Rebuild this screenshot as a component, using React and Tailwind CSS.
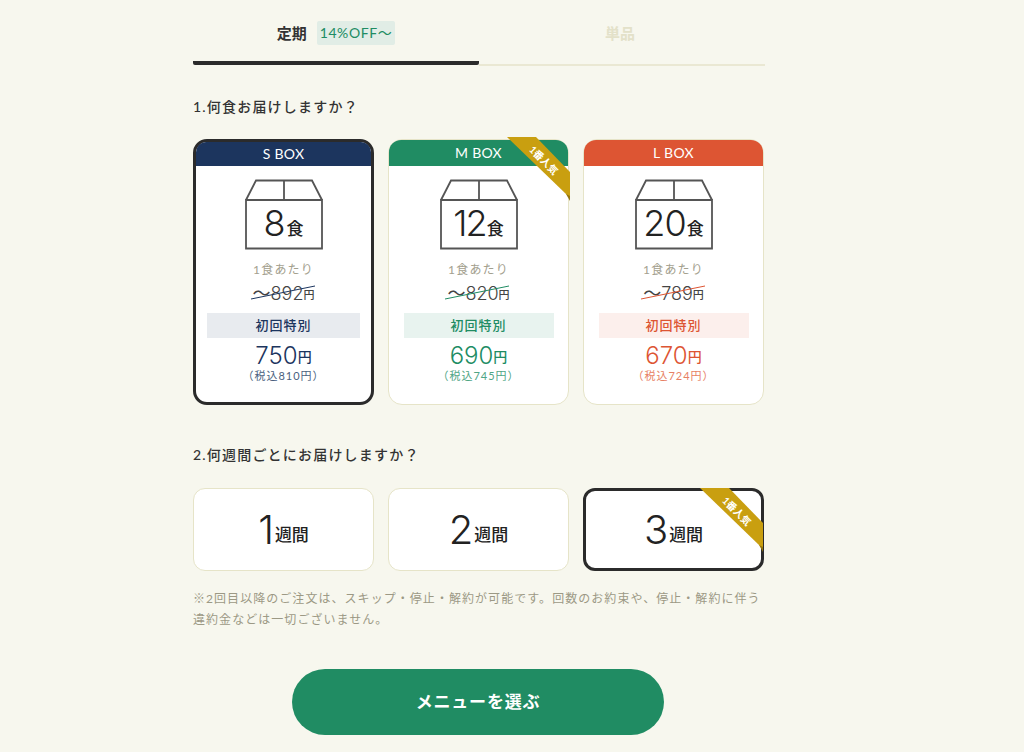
import React from 'react';

const FONT = { fontFamily: 'Lato, "Noto Sans CJK JP", sans-serif' };
const NUM = { fontFamily: 'Inter, sans-serif' };

const boxes = [
  { name: 'S BOX', count: 8, countClass: '', old: '892', price: '750', tax: '（税込810円）', selected: true, header: 'bg-[#1c355e]', text: 'text-[#1c355e]', tax2: 'text-[#4a5f80]', band: 'bg-[#e8ebef] w-[153px]', line: '#1c355e' },
  { name: 'M BOX', count: 12, countClass: 'tracking-[-2px]', old: '820', price: '690', tax: '（税込745円）', ribbon: true, header: 'bg-[#208c63]', text: 'text-[#208c63]', tax2: 'text-[#4fa585]', band: 'bg-[#e8f3ef] w-[150px]', line: '#208c63' },
  { name: 'L BOX', count: 20, countClass: 'tracking-[-1px]', old: '789', price: '670', tax: '（税込724円）', header: 'bg-[#dd5533]', text: 'text-[#dd5533]', tax2: 'text-[#e77f65]', band: 'bg-[#fcefec] w-[150px]', line: '#dd5533' },
];

function Ribbon() {
  return (
    <div className="absolute -right-[2px] -top-[3px] w-[63px] h-[64px]">
      <svg viewBox="0 0 63 64" className="absolute inset-0 w-full h-full">
        <path d="M59 57L63 64V53Z" fill="#94750c" />
        <path d="M0 0H29L63 35V59L59 57Z" fill="#c99f10" />
      </svg>
      <span className="absolute left-[19px] top-[17px] w-[36px] text-center text-[10px] leading-[12px] font-bold text-white rotate-45 whitespace-nowrap">1番人気</span>
    </div>
  );
}

function BoxIcon() {
  return (
    <svg viewBox="0 0 78 71" className="w-[78px] h-[71px]" fill="none" stroke="#555" strokeWidth="1.8">
      <path d="M1 21H77V69.5H1Z" />
      <path d="M1 21L11 1.5H67L77 21M39 1.5V21" />
    </svg>
  );
}

function BoxCard({ box }) {
  return (
    <div className={`relative w-[181px] h-[266px] bg-white rounded-[14px] ${box.selected ? 'border-[3px] border-[#2b2b2b]' : 'border border-[#e6e4c8]'}`}>
      <div className={`flex items-center justify-center pb-[2px] text-white text-[14px] tracking-[0.3px] ${box.header} ${box.selected ? 'h-[24px] rounded-t-[10px]' : 'h-[26px] rounded-t-[12px]'}`}>{box.name}</div>
      <div className="flex flex-col items-center pt-[13px]">
        <div className="relative w-[78px] h-[71px]">
          <BoxIcon />
          <div className="absolute left-0 right-0 top-[20px] h-[48px] flex items-center justify-center text-[#222]">
            <span className={`text-[36px] leading-none font-light ${box.countClass}`} style={NUM}>{box.count}</span>
            <span className="text-[17px] font-medium ml-[1px] mt-[11px]">食</span>
          </div>
        </div>
        <div className="mt-[11px] text-[12px] leading-[18px] tracking-[1.2px] text-[#a3a08e]">1食あたり</div>
        <div className="relative mt-[1px] h-[26px] flex items-center justify-center text-[#444]">
          <span className="text-[18px]">〜</span>
          <span className="text-[18px] font-light mt-[1px]" style={NUM}>{box.old}</span>
          <span className="text-[11px] mt-[4px] font-medium">円</span>
          <svg viewBox="0 0 64 16" className="absolute left-[-2px] top-[4px] w-[64px] h-[16px]" fill="none">
            <path d="M0 15L64 2" stroke={box.line} strokeWidth="1" />
          </svg>
        </div>
        <div className={`mt-[7px] h-[25px] flex items-center justify-center text-[13px] font-medium tracking-[1px] ${box.band} ${box.text}`}>初回特別</div>
        <div className={`mt-[2px] h-[28px] flex items-center ${box.text}`}>
          <span className="text-[24px] leading-none font-light mt-[3px]" style={NUM}>{box.price}</span>
          <span className="text-[14px] mt-[5px] font-medium">円</span>
        </div>
        <div className={`text-[11px] leading-[14px] mt-[1px] tracking-[1px] ${box.tax2}`}>{box.tax}</div>
      </div>
      {box.ribbon && <Ribbon />}
    </div>
  );
}

function WeekCard({ n, selected }) {
  return (
    <div className={`relative w-[181px] h-[83px] bg-white rounded-[12px] flex items-center justify-center text-[#222] ${selected ? 'border-[3px] border-[#2b2b2b]' : 'border border-[#e6e4c8]'}`}>
      <span className="text-[40px] leading-none font-light" style={NUM}>{n}</span>
      <span className="text-[17px] font-medium ml-[1px] mt-[10px]">週間</span>
      {selected && <Ribbon />}
    </div>
  );
}

export default function App() {
  return (
    <div className="min-h-[752px] bg-[#f7f7ee] pl-[193px] overflow-hidden" style={FONT}>
      <div className="w-[572px] h-[752px]">
        <div className="flex items-start">
          <div className="w-[286px] h-[65px] border-b-4 border-[#2b2b2b] rounded-b-[2px] flex items-start justify-center pt-[21px]">
            <span className="text-[15px] font-bold text-[#333] leading-[24px]">定期</span>
            <span className="ml-[10px] px-[3px] h-[24px] leading-[24px] bg-[#e1ede6] rounded-[2px] text-[#208c63] text-[14px] tracking-[0.6px]">14%OFF〜</span>
          </div>
          <div className="w-[286px] h-[66px] border-b-2 border-[#eae8d3] flex items-start justify-center pt-[21px]">
            <span className="text-[15px] font-bold text-[#e3e1c9] leading-[24px] -ml-[4px]">単品</span>
          </div>
        </div>

        <h2 className="mt-[31px] text-[14px] leading-[20px] font-medium tracking-[1.2px] text-[#333]">1.何食お届けしますか？</h2>
        <div className="mt-[22px] flex gap-[14px]">
          {boxes.map((b) => <BoxCard key={b.name} box={b} />)}
        </div>

        <h2 className="mt-[40px] text-[14px] leading-[20px] font-medium tracking-[1.2px] text-[#333]">2.何週間ごとにお届けしますか？</h2>
        <div className="mt-[23px] flex gap-[14px]">
          <WeekCard n={1} />
          <WeekCard n={2} />
          <WeekCard n={3} selected />
        </div>

        <p className="mt-[17px] text-[12px] leading-[21px] tracking-[1.05px] text-[#9c9985]">※2回目以降のご注文は、スキップ・停止・解約が可能です。回数のお約束や、停止・解約に伴う違約金などは一切ございません。</p>

        <div className="mt-[39px] flex justify-center pr-[2px]">
          <button className="w-[372px] h-[66px] rounded-full bg-[#208c63] text-white text-[17px] font-bold tracking-[0.8px]">メニューを選ぶ</button>
        </div>
      </div>
    </div>
  );
}
